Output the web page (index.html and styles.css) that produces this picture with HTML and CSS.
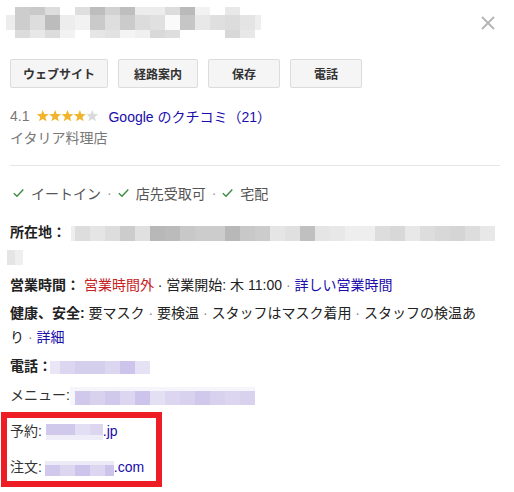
FILE: index.html
```html
<!DOCTYPE html>
<html lang="ja">
<head>
<meta charset="utf-8">
<title>Place panel</title>
<link rel="stylesheet" href="styles.css">
</head>
<body>
<div class="panel">
  <div class="header">
    <div class="title-mosaic">
      <div class="tm-top"></div>
      <div class="tm-mid"></div>
      <div class="tm-bot"></div>
    </div>
    <svg class="close" width="14" height="14" viewBox="0 0 14 14" aria-label="閉じる">
      <path d="M1 1 L13 13 M13 1 L1 13" stroke="#b5b5b5" stroke-width="1.8" fill="none"/>
    </svg>
  </div>

  <div class="buttons">
    <div class="btn btn-web">ウェブサイト</div>
    <div class="btn btn-route">経路案内</div>
    <div class="btn btn-small">保存</div>
    <div class="btn btn-small">電話</div>
  </div>

  <div class="rating">
    <span class="score">4.1</span>
    <svg class="stars" width="67" height="12" viewBox="0 0 67 13">
      <defs>
        <polygon id="star" points="6.7,0 8.41,4.45 13.17,4.7 9.46,7.7 10.7,12.3 6.7,9.7 2.7,12.3 3.94,7.7 0.23,4.7 4.99,4.45"/>
      </defs>
      <use href="#star" x="0" fill="#f1b52c"/>
      <use href="#star" x="13.4" fill="#f1b52c"/>
      <use href="#star" x="26.8" fill="#f1b52c"/>
      <use href="#star" x="40.2" fill="#f1b52c"/>
      <use href="#star" x="53.6" fill="#dadada"/>
    </svg>
    <a class="link">Google のクチコミ（21）</a>
  </div>
  <div class="category">イタリア料理店</div>

  <div class="divider"></div>

  <div class="services">
    <svg class="check first" width="11" height="10" viewBox="0 0 11 10"><path d="M0.8 5.2 L4 8.3 L10.3 1.5" stroke="#3d8b40" stroke-width="1.4" fill="none"/></svg><span>イートイン</span><span class="dot">·</span><svg class="check" width="11" height="10" viewBox="0 0 11 10"><path d="M0.8 5.2 L4 8.3 L10.3 1.5" stroke="#3d8b40" stroke-width="1.4" fill="none"/></svg><span>店先受取可</span><span class="dot">·</span><svg class="check" width="11" height="10" viewBox="0 0 11 10"><path d="M0.8 5.2 L4 8.3 L10.3 1.5" stroke="#3d8b40" stroke-width="1.4" fill="none"/></svg><span>宅配</span>
  </div>

  <div class="info">
    <div class="row"><span class="label">所在地：</span> <span class="mosaic m-addr"></span><span class="mosaic m-addr2"></span></div>
    <div class="row row-gap"><span class="label">営業時間：</span> <span class="closed">営業時間外</span> · 営業開始: 木 11:00 <span class="sep">·</span> <a class="link">詳しい営業時間</a></div>
    <div class="row row-health"><span class="label">健康、安全:</span> <span>要マスク</span> <span class="sep">·</span> <span>要検温</span> <span class="sep">·</span> <span>スタッフはマスク着用</span> <span class="sep">·</span> <span>スタッフの検温あ</span><span>り</span> <span class="sep">·</span> <a class="link">詳細</a></div>
    <div class="row row-gap"><span class="label">電話：</span><span class="mosaic m-phone"></span></div>
    <div class="row row-gap"><span class="plain-label">メニュー:</span><span class="mosaic m-menu"></span></div>
    <div class="highlight">
      <div class="row"><span class="plain-label">予約:</span> <span class="mosaic m-reserve"></span><a class="link">.jp</a></div>
      <div class="row row-wide"><span class="plain-label">注文:</span> <span class="mosaic m-order"></span><a class="link">.com</a></div>
    </div>
  </div>
</div>
</body>
</html>
```

FILE: styles.css
```css
html {
  overflow: hidden;
}

html, body {
  margin: 0;
  padding: 0;
  background: #fff;
}

body {
  font-family: "Liberation Sans", Arial, "Noto Sans CJK JP", sans-serif;
  font-size: 14px;
  color: #222;
}

.panel {
  padding: 0 14px 0 10px;
}

/* header */
.header {
  display: flex;
  justify-content: space-between;
  align-items: flex-start;
}

.title-mosaic {
  margin-top: 7px;
  margin-left: -4px;
  width: 255px;
}

.tm-top {
  height: 8px;
  background: linear-gradient(90deg, #fff 0 9px, #cdcdcd 9px 24px, #c9c9c9 24px 39px, #ddd 39px 54px, #fff 54px 69px, #dedede 69px 84px, #bdbdbd 84px 99px, #d2d2d2 99px 114px, #bebebe 114px 129px, #ececec 129px 159px, #dcdcdc 159px 174px, #bababa 174px 189px, #f2f2f2 189px 204px, #fff 204px 219px, #e8e8e8 219px 234px, #fff 234px);
}

.tm-mid {
  height: 15px;
  background: linear-gradient(90deg, #ededed 0 9px, #cdcdcd 9px 24px, #ddd 24px 39px, #bcbcbc 39px 54px, #ededed 54px 69px, #f2f2f2 69px 84px, #cacaca 84px 99px, #dedede 99px 114px, #cbcbcb 114px 129px, #dcdcdc 129px 144px, #e0e0e0 144px 159px, #fafafa 159px 174px, #c6c6c6 174px 189px, #e8e8e8 189px 204px, #dfdfdf 204px 219px, #dcdcdc 219px 234px, #e4e4e4 234px 249px, #eee 249px);
}

.tm-bot {
  height: 8px;
  background: linear-gradient(90deg, #fff 0 9px, #dcdcdc 9px 24px, #e8e8e8 24px 39px, #dcdcdc 39px 54px, #f2f2f2 54px 69px, #fff 69px 84px, #e6e6e6 84px 99px, #e2e2e2 99px 114px, #f4f4f4 114px 129px, #f0f0f0 129px 144px, #d9d9d9 144px 159px, #dedede 159px 174px, #fff 174px 219px, #d8d8d8 219px 234px, #e8e8e8 234px 249px, #fff 249px);
}

.close {
  display: block;
  margin-top: 16px;
  margin-right: 5px;
}

/* action buttons */
.buttons {
  display: flex;
  gap: 10px;
  margin-top: 21px;
}

.btn {
  box-sizing: border-box;
  height: 29px;
  display: flex;
  align-items: center;
  justify-content: center;
  background: #f5f5f5;
  border: 1px solid #dcdcdc;
  border-radius: 2px;
  font-size: 12px;
  font-weight: bold;
  color: #333;
}

.btn-web { width: 98px; }
.btn-route { width: 80px; }
.btn-small { width: 72px; }

/* rating */
.rating {
  display: flex;
  align-items: center;
  margin-top: 16px;
  height: 23px;
  color: #777;
}

.stars {
  display: block;
  margin: 0 7px 0 5px;
}

.link {
  color: #1a0dab;
  text-decoration: none;
}

.category {
  line-height: 23px;
  color: #777;
}

.divider {
  margin-top: 15px;
  height: 1px;
  background: #e6e6e6;
}

/* services */
.services {
  margin-top: 15px;
  display: flex;
  align-items: center;
  height: 24px;
  color: #555;
}

.check {
  display: block;
  margin-right: 7px;
}

.check.first {
  margin-left: 3px;
}

.dot {
  padding: 0 6px;
  color: #999;
}

/* info rows */
.info {
  margin-top: 15px;
}

.row {
  line-height: 24px;
}

.row-gap {
  margin-top: 5px;
}

.row-health {
  margin-top: 4px;
  padding-right: 15px;
}

.row-wide {
  margin-top: 12px;
}

.label {
  font-weight: bold;
  color: #222;
}

.plain-label {
  color: #333;
}

.closed {
  color: #c5221f;
}

.sep {
  color: #8a8a8a;
}

.mosaic {
  display: inline-block;
  vertical-align: middle;
}

.m-addr {
  width: 424px;
  height: 15px;
  margin-left: 1px;
  background: linear-gradient(90deg, #eee 0 4px, #ddd 4px 19px, #e5e5e5 19px 34px, #ddd 34px 49px, #ccc 49px 64px, #e0e0e0 64px 79px, #b8b8b8 79px 94px, #bbb 94px 109px, #c8c8c8 109px 124px, #ccc 124px 154px, #b8b8b8 154px 169px, #c8c8c8 169px 184px, #ccc 184px 199px, #e5e5e5 199px 214px, #e0e0e0 214px 229px, #c0c0c0 229px 244px, #e5e5e5 244px 259px, #e8e8e8 259px 274px, #eee 274px 304px, #ddd 304px 319px, #d8d8d8 319px 334px, #e8e8e8 334px 349px, #ddd 349px 364px, #d8d8d8 364px 379px, #d5d5d5 379px 394px, #ddd 394px 409px, #e8e8e8 409px 424px);
}

.m-addr2 {
  width: 16px;
  height: 15px;
  margin-left: -3px;
  background: linear-gradient(90deg, #e5e5e5 0 8px, #efefef 8px 16px);
}

.m-phone {
  width: 100px;
  height: 13px;
  margin-left: -2px;
  background: linear-gradient(90deg, #eae6f6 0 10px, #dcd6f0 10px 25px, #d5cfee 25px 55px, #dcd6f0 55px 70px, #ccc4ea 70px 85px, #e6e2f5 85px 100px);
}

.m-menu {
  width: 185px;
  height: 14px;
  border-top: 4px solid #f6f5fb;
  background: linear-gradient(90deg, #f7f6fb 0 5px, #d0c9ec 5px 20px, #d8d2ef 20px 35px, #d0c9ec 35px 50px, #dcd6f0 50px 65px, #ccc4ea 65px 80px, #e4e0f4 80px 95px, #dcd6f0 95px 110px, #d8d2ef 110px 125px, #d0c9ec 125px 140px, #d8d2ef 140px 155px, #dcd6f0 155px 170px, #d8d2ef 170px 185px);
}

.m-reserve {
  width: 57px;
  height: 11px;
  border-bottom: 5px solid #efedf8;
  background: linear-gradient(90deg, #d0c9ec 0 29px, #e2def3 29px 44px, #dcd6f0 44px 57px);
}

.m-order {
  width: 69px;
  height: 11px;
  margin-left: -1px;
  border-top: 4px solid #eceaf7;
  background: linear-gradient(90deg, #d0c9ec 0 15px, #dcd6f0 15px 30px, #ccc4ea 30px 45px, #dcd6f0 45px 60px, #ccc4ea 60px 69px);
}

/* red annotation box around the reservation / order rows */
.highlight {
  box-sizing: border-box;
  width: 161px;
  margin: 5px 0 0 -9px;
  padding: 1px 0 2px 3px;
  border: 6px solid #ee1c25;
}
```
